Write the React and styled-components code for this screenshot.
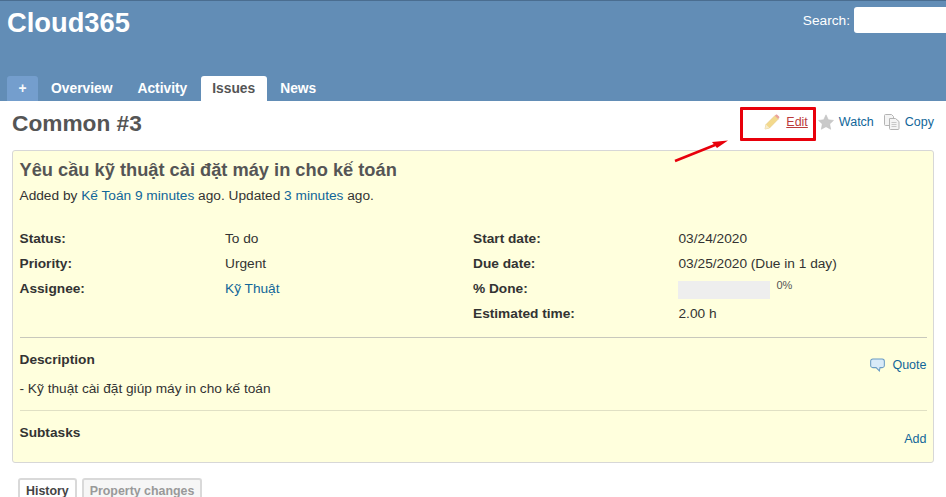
import styled, { createGlobalStyle } from "styled-components";

const GlobalStyle = createGlobalStyle`
  html, body {
    margin: 0;
    padding: 0;
    background: #fff;
    overflow: hidden;
  }
  body {
    font-family: "Liberation Sans", Arial, sans-serif;
    font-size: 13.7px;
    color: #333;
  }
  a {
    color: #116699;
    text-decoration: none;
  }
`;

const Page = styled.div`
  position: relative;
  width: 946px;
  height: 497px;
  overflow: hidden;
`;

const Header = styled.header`
  height: 100px;
  background: #628db6;
  border-top: 1px solid #4a6d90;
  display: flex;
  flex-direction: column;
  justify-content: space-between;
`;

const HeaderTop = styled.div`
  display: flex;
  justify-content: space-between;
  align-items: flex-start;
`;

const Title = styled.h1`
  margin: 6px 0 0 7px;
  font-size: 27.3px;
  line-height: 32px;
  font-weight: bold;
  color: #fff;
`;

const Search = styled.label`
  display: flex;
  align-items: center;
  gap: 4px;
  margin: 6px -8px 0 0;
  color: #fff;
  font-size: 13.7px;
`;

const SearchInput = styled.input`
  box-sizing: border-box;
  width: 100px;
  height: 26px;
  border: 0;
  border-radius: 3px;
  background: #fff;
`;

const Tabs = styled.nav`
  display: flex;
  align-items: flex-end;
  padding-left: 7px;
`;

const Tab = styled.a`
  display: block;
  height: 25px;
  line-height: 25px;
  padding: ${(p) => (p.$plus ? "0 11.500px" : p.$active ? "0 12px 0 11.500px" : "0 12px")};
  margin-left: ${(p) => (p.$active ? "0.5px" : "0")};
  margin-right: 1px;
  font-size: 13.8px;
  font-weight: bold;
  border-radius: 3px 3px 0 0;
  color: ${(p) => (p.$active ? "#555" : "#fff")};
  background: ${(p) => (p.$active ? "#fff" : p.$plus ? "#759fcf" : "transparent")};
  opacity: ${(p) => (p.$plus ? 0.95 : 1)};
`;

const Content = styled.main`
  padding: 0 12px;
`;

const TitleRow = styled.div`
  display: flex;
  justify-content: space-between;
  align-items: flex-start;
  height: 49px;
`;

const IssueRef = styled.h2`
  margin: 9px 0 0;
  font-size: 22.7px;
  line-height: 26px;
  font-weight: bold;
  color: #555;
`;

const Contextual = styled.div`
  display: flex;
  align-items: center;
  margin-top: 13px;
  font-size: 12.5px;
`;

const Action = styled.a`
  display: flex;
  align-items: center;
  gap: ${(p) => (p.$edit ? "6px" : "5px")};
  margin-left: 10px;
  color: ${(p) => (p.$edit ? "#bb3b3b" : "#116699")};
  text-decoration: ${(p) => (p.$edit ? "underline" : "none")};
  svg {
    display: block;
    flex: none;
  }
`;

const IssueBox = styled.section`
  box-sizing: border-box;
  height: 313px;
  padding: 8px 6.500px 0;
  background: #ffffdd;
  border: 1px solid #d7d7d7;
  border-radius: 3px;
`;

const Subject = styled.h3`
  margin: 0;
  font-size: 18.25px;
  line-height: 22px;
  font-weight: bold;
  color: #555;
`;

const Meta = styled.p`
  margin: 5px 0 0;
  line-height: 20px;
`;

const Attributes = styled.div`
  display: grid;
  grid-template-columns: 205.500px 248px 205.500px 1fr;
  grid-auto-rows: 25px;
  align-items: center;
  margin-top: 20px;
`;

const Label = styled.div`
  font-weight: bold;
`;

const Progress = styled.div`
  display: flex;
  align-items: flex-start;
  gap: 7px;
  margin-left: -1px;
`;

const ProgressBar = styled.div`
  width: 92px;
  height: 18px;
  margin-top: 3px;
  background: #eeeeee;
`;

const ProgressText = styled.span`
  margin-top: 1px;
  font-size: 11px;
  color: #555;
`;

const Rule = styled.hr`
  margin: ${(p) => p.$margin};
  border: 0;
  border-top: ${(p) => (p.$strong ? "1px solid #c8c8bc" : "1px solid #e0e0c4")};
`;

const SectionRow = styled.div`
  display: flex;
  justify-content: space-between;
  align-items: flex-start;
`;

const SectionTitle = styled.div`
  margin-top: ${(p) => p.$top}px;
  font-size: 13.7px;
  font-weight: bold;
  line-height: 16px;
`;

const SmallLink = styled.a`
  display: flex;
  align-items: center;
  gap: 7px;
  font-size: 12.5px;
  margin-top: ${(p) => p.$top}px;
  svg {
    display: block;
  }
`;

const DescriptionText = styled.p`
  margin: 8px 0 0;
  line-height: 18px;
`;

const HistoryTabs = styled.div`
  display: flex;
  gap: 5px;
  margin: 15px 0 0 6px;
`;

const HistoryTab = styled.a`
  display: block;
  padding: 3px 6px 8px;
  font-size: 12.4px;
  line-height: 16px;
  font-weight: bold;
  color: ${(p) => (p.$active ? "#444" : "#999")};
  border: 2px solid #d9d9d9;
  border-bottom: 0;
  border-radius: 3px 3px 0 0;
  background: ${(p) => (p.$active ? "#fff" : "#f6f6f6")};
`;

const Highlight = styled.div`
  position: absolute;
  left: 740px;
  top: 107px;
  width: 76px;
  height: 34px;
  box-sizing: border-box;
  border: 3px solid #e8000b;
  border-radius: 1px;
  pointer-events: none;
`;

const Arrow = styled.svg`
  position: absolute;
  left: 670px;
  top: 135px;
  pointer-events: none;
`;

const PencilIcon = () => (
  <svg width="16" height="16" viewBox="0 0 16 16">
    <path d="M1 15l1-4.500L10.800 1.700l3.500 3.400L5.500 14z" fill="#f3d98c" stroke="#e2c67e" strokeWidth="0.6" />
    <path d="M10.800 1.700l1-1c.5-.4 1-.4 1.400 0l1.900 1.900c.4.400.4 1 0 1.400l-.8 1.100z" fill="#eaa29a" />
    <path d="M2 10.500L5.500 14 1 15z" fill="#f7eccb" />
  </svg>
);

const StarIcon = () => (
  <svg width="16" height="16" viewBox="0 0 16 16">
    <path d="M8 .8l2.300 4.900 5.200.7-3.800 3.600 1 5.300L8 12.700l-4.700 2.600 1-5.300L.5 6.400l5.200-.7z" fill="#c9c9c9" stroke="#bdbdbd" strokeWidth="0.5" />
  </svg>
);

const CopyIcon = () => (
  <svg width="16" height="16" viewBox="0 0 16 16" fill="#f4f4f4" stroke="#b4b4b4" strokeWidth="1">
    <path d="M.5 1.500a1 1 0 0 1 1-1h6l2 2v9h-8a1 1 0 0 1-1-1z" />
    <path d="M5.500 4.500h6l3.500 3v7a1 1 0 0 1-1 1H6.500a1 1 0 0 1-1-1z" />
    <path d="M7.500 8.500h5M7.500 10.500h5M7.500 12.500h5" strokeWidth="0.7" />
  </svg>
);

const CommentIcon = () => (
  <svg width="15" height="14" viewBox="0 0 16 14">
    <path d="M3 .7h10A2.300 2.300 0 0 1 15.300 3v4.500A2.300 2.300 0 0 1 13 9.800h-2.300l-.7 3.500-3.500-3.500H3A2.300 2.300 0 0 1 .7 7.500V3A2.300 2.300 0 0 1 3 .7z" fill="#d8eaf8" stroke="#6a9cc4" strokeWidth="1.1" />
  </svg>
);

export default function App() {
  return (
    <Page>
      <GlobalStyle />
      <Header>
        <HeaderTop>
          <Title>Cloud365</Title>
          <Search>
            Search:
            <SearchInput />
          </Search>
        </HeaderTop>
        <Tabs>
          <Tab $plus>+</Tab>
          <Tab>Overview</Tab>
          <Tab>Activity</Tab>
          <Tab $active>Issues</Tab>
          <Tab>News</Tab>
        </Tabs>
      </Header>
      <Content>
        <TitleRow>
          <IssueRef>Common #3</IssueRef>
          <Contextual>
            <Action $edit>
              <PencilIcon />
              Edit
            </Action>
            <Action>
              <StarIcon />
              Watch
            </Action>
            <Action>
              <CopyIcon />
              Copy
            </Action>
          </Contextual>
        </TitleRow>
        <IssueBox>
          <Subject>Yêu cầu kỹ thuật cài đặt máy in cho kế toán</Subject>
          <Meta>
            Added by <a>Kế Toán</a> <a>9 minutes</a> ago. Updated <a>3 minutes</a> ago.
          </Meta>
          <Attributes>
            <Label>Status:</Label>
            <div>To do</div>
            <Label>Start date:</Label>
            <div>03/24/2020</div>
            <Label>Priority:</Label>
            <div>Urgent</div>
            <Label>Due date:</Label>
            <div>03/25/2020 (Due in 1 day)</div>
            <Label>Assignee:</Label>
            <div>
              <a>Kỹ Thuật</a>
            </div>
            <Label>% Done:</Label>
            <Progress>
              <ProgressBar />
              <ProgressText>0%</ProgressText>
            </Progress>
            <div />
            <div />
            <Label>Estimated time:</Label>
            <div>2.00 h</div>
          </Attributes>
          <Rule $strong $margin="11px 0 0" />
          <SectionRow>
            <SectionTitle $top={14}>Description</SectionTitle>
            <SmallLink $top={20}>
              <CommentIcon />
              Quote
            </SmallLink>
          </SectionRow>
          <DescriptionText>- Kỹ thuật cài đặt giúp máy in cho kế toán</DescriptionText>
          <Rule $margin="12px 0 0" />
          <SectionRow>
            <SectionTitle $top={14}>Subtasks</SectionTitle>
            <SmallLink $top={21}>Add</SmallLink>
          </SectionRow>
        </IssueBox>
        <HistoryTabs>
          <HistoryTab $active>History</HistoryTab>
          <HistoryTab>Property changes</HistoryTab>
        </HistoryTabs>
      </Content>
      <Highlight />
      <Arrow width="62" height="32" viewBox="0 0 62 32">
        <path d="M5 26L45 10" stroke="#e8000b" strokeWidth="2.500" />
        <path d="M58 5.500L42 7l5 6z" fill="#e8000b" />
      </Arrow>
    </Page>
  );
}
